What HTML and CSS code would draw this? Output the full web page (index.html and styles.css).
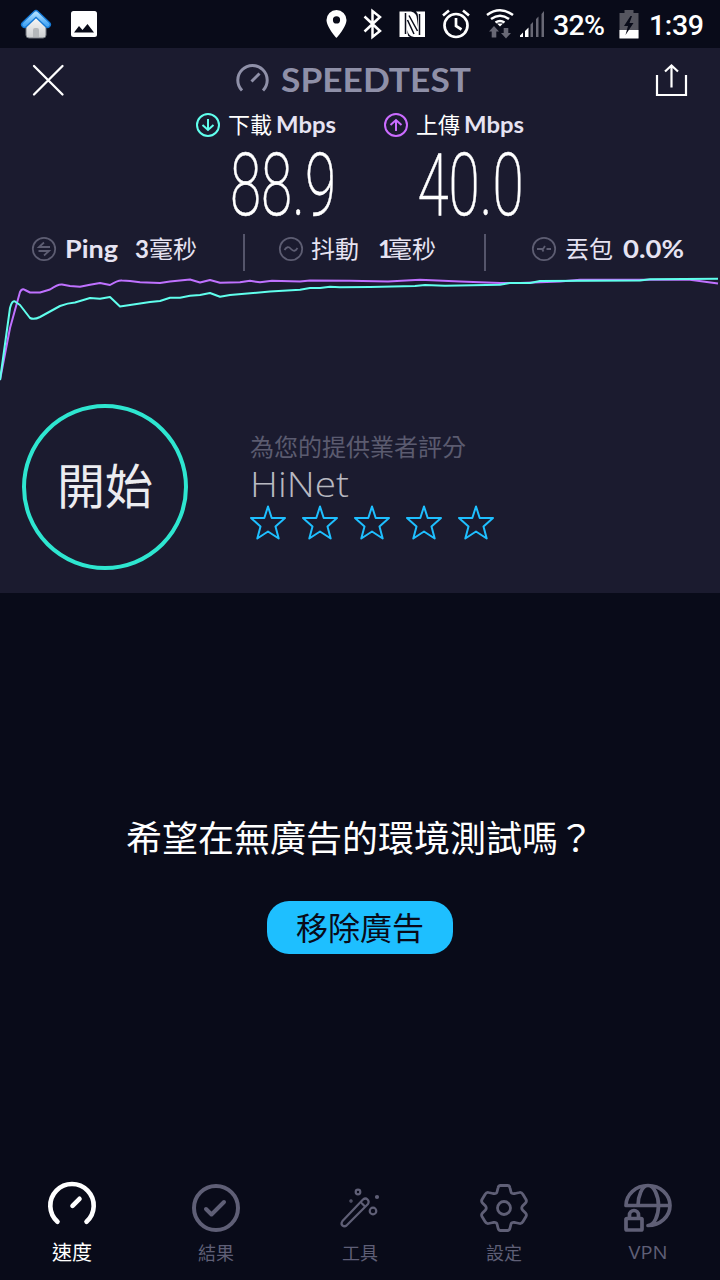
FILE: index.html
```html
<!DOCTYPE html>
<html lang="zh-Hant">
<head>
<meta charset="utf-8">
<title>Speedtest</title>
<link rel="stylesheet" href="styles.css">
</head>
<body>
<div class="app">
  <div class="status">
    <svg width="110" height="48" viewBox="0 0 110 48">
      <defs>
        <linearGradient id="roof" x1="0" y1="0" x2="0" y2="1"><stop offset="0" stop-color="#a8dcff"/><stop offset="1" stop-color="#4aa8f5"/></linearGradient>
        <linearGradient id="wall" x1="0" y1="0" x2="0" y2="1"><stop offset="0" stop-color="#fff"/><stop offset="1" stop-color="#ccced0"/></linearGradient>
      </defs>
      <path d="M26 22 36 14 46 22V35Q46 38 43 38H29Q26 38 26 35Z" fill="url(#wall)" stroke="#70757c" stroke-width="1"/>
      <path d="M33 37V30Q33 28 35 28H37Q39 28 39 30V37Z" fill="#b5b8bb"/>
      <path d="M24.500 24.500 36 13.500 47.500 24.500" fill="none" stroke="#1478d4" stroke-width="7" stroke-linecap="round" stroke-linejoin="round"/>
      <path d="M24.500 24.500 36 13.500 47.500 24.500" fill="none" stroke="url(#roof)" stroke-width="4.300" stroke-linecap="round" stroke-linejoin="round"/>
      <rect x="71" y="11" width="26" height="26" rx="2.500" fill="#fff"/>
      <path d="M74 32.500 79 26l3.500 4 5-6 6.500 8.500Z" fill="#090b19"/>
    </svg>
    <svg class="status-icons" width="224" height="48" viewBox="322 0 224 48">
      <path d="M336.500 10a10 10 0 0 0-10 10c0 7 10 18 10 18s10-11 10-18a10 10 0 0 0-10-10Zm0 6.300a3.600 3.600 0 1 1 0 7.200 3.600 3.600 0 0 1 0-7.200Z" fill="#fff" fill-rule="evenodd"/>
      <path d="M364.500 16.500 380 31l-7.500 6V11l7.500 6-15.500 14.500" fill="none" stroke="#fff" stroke-width="2.500"/>
      <path d="M399.500 11.500H411Q417 13 417 19L418 27V16Q418 13 416 11.500H425V37H414Q408 36 407.500 30V22V33Q407.500 36 410 37H399.500Z" fill="#fff"/>
      <path d="M405.500 13V34M409 15.500 417.500 31M407.500 20 414 34M419.500 14V35" fill="none" stroke="#090b19" stroke-width="1.500"/>
      <g fill="none" stroke="#fff" stroke-width="2.700"><circle cx="456" cy="25.500" r="11.500"/><path d="M456 18v8l5.500 3.500M443 15.500l6-5M469 15.500l-6-5"/></g>
      <g fill="none" stroke="#fff" stroke-width="2.500"><path d="M487 15q13-9.500 26 0M491 19q9-6.500 18 0M495.500 22.500q4.500-3 9 0"/></g><path d="m497 23.500 3 3 3-3Z" fill="#fff"/>
      <path d="m494 26-5 5.500h2.700v6h4.600v-6h2.700ZM506 38.500l-5-5.500h2.700v-5h4.600v5h2.700Z" fill="#686875"/>
      <path d="M520 37v-1.500l3-3V37ZM525 37v-6l3.500-3.500V37Z" fill="#fff"/>
      <path d="M530.500 37V24.500l2.500-2.500v15ZM536 37V19l2.500-2.500V37ZM541.500 37V14L544 11v26Z" fill="#686875"/>
    </svg>
    <svg width="158" height="48" viewBox="552 0 158 48">
      <text class="clock" x="553" y="34.500" textLength="52">32%</text>
      <path d="M619.500 13h5v-3h9v3h5v25h-19Z" fill="#55555f"/><path d="M619.500 30h19v8.500h-19Z" fill="#fff"/><path d="m630.500 16-6.500 10h4l-2.500 9 8-12h-4l2.500-7Z" fill="#090b19"/>
      <text class="clock" x="649" y="34.500" textLength="55">1:39</text>
    </svg>
  </div>

  <div class="panel">
    <div class="header">
      <svg width="32" height="32" viewBox="32 64 32 32"><path d="M34 66 62.500 94.500M62.500 66 34 94.500" stroke="#fff" stroke-width="2.300" stroke-linecap="round"/></svg>
      <svg class="logo" width="240" height="44" viewBox="234 58 240 44">
        <g fill="none" stroke="#8f90a8" stroke-width="3"><path d="M242 90.500a14.700 14.700 0 1 1 21 0M251.500 81.500l8-8"/></g>
        <text class="brand" x="281" y="91.500" textLength="190" lengthAdjust="spacingAndGlyphs">SPEEDTEST</text>
      </svg>
      <svg width="34" height="34" viewBox="654 63 34 34"><path d="M657 75v20h29V75M671.500 87.500V65.500M665 71.500l6.500-6 6.500 6" fill="none" stroke="#fff" stroke-width="2.200"/></svg>
    </div>

    <div class="labels">
      <div class="label">
        <svg width="24" height="24" viewBox="0 0 24 24" fill="none" stroke="#60ffed" stroke-width="2"><circle cx="12" cy="12" r="11"/><path d="M12 6v11M6.500 12l5.500 5 5.500-5"/></svg>
        <span class="label-text">下載</span>
        <svg width="62" height="30"><text class="unit" x="1" y="23" textLength="60" lengthAdjust="spacingAndGlyphs">Mbps</text></svg>
      </div>
      <div class="label">
        <svg width="24" height="24" viewBox="0 0 24 24" fill="none" stroke="#cb6cff" stroke-width="2"><circle cx="12" cy="12" r="11"/><path d="M12 18V7M6.500 12 12 7l5.500 5"/></svg>
        <span class="label-text">上傳</span>
        <svg width="62" height="30"><text class="unit" x="1" y="23" textLength="60" lengthAdjust="spacingAndGlyphs">Mbps</text></svg>
      </div>
    </div>

    <div class="values">
      <svg width="110" height="76"><text class="value" x="2" y="70.500" textLength="106" lengthAdjust="spacingAndGlyphs">88.9</text></svg>
      <svg width="110" height="76"><text class="value" x="2.500" y="70.500" textLength="106" lengthAdjust="spacingAndGlyphs">40.0</text></svg>
    </div>

    <div class="metrics">
      <div class="metric ping">
        <svg width="24" height="24" viewBox="0 0 24 24" fill="none" stroke="#5d5d72" stroke-width="1.800"><circle cx="12" cy="12" r="11.200"/><path d="M18 10H7l5-4.500M6.500 14H17l-5 4.500"/></svg>
        <svg width="54" height="32"><text class="metric-latin" x="0" y="25" textLength="53" lengthAdjust="spacingAndGlyphs">Ping</text></svg>
        <span class="reading"><b>3</b>毫秒</span>
      </div>
      <div class="metric jitter">
        <svg width="24" height="24" viewBox="0 0 24 24" fill="none" stroke="#5d5d72" stroke-width="1.800"><circle cx="12" cy="12" r="11.200"/><path d="M5.500 13q3-5 6.500-1t6.500-1"/></svg>
        <span class="cjk">抖動</span>
        <span class="reading one"><b>1</b>毫秒</span>
      </div>
      <div class="metric loss">
        <svg width="24" height="24" viewBox="0 0 24 24" fill="none" stroke="#5d5d72" stroke-width="1.800"><circle cx="12" cy="12" r="11.200"/><path d="M5 12h5l1.500 2.500M11 12l2-3M14.500 12h4.500"/></svg>
        <span class="cjk">丟包</span>
        <svg width="62" height="32"><text class="metric-latin" x="1" y="25" textLength="61" lengthAdjust="spacingAndGlyphs">0.0%</text></svg>
      </div>
    </div>

    <svg class="chart" width="720" height="110" viewBox="0 274 720 110" fill="none" stroke-width="2" stroke-linejoin="round">
      <path stroke="#bf71ff" d="M0 380 10 328 20 292Q22 288 25 290L30 292.500H40L50 289.500Q58 284 62 284.500L70 286 80 286.800 90 284.700 100 283 110 285Q118 280 122 280.500L130 281 140 282.300 160 283 170 281.500 190 279.500 200 282.500 210 280 220 282.700 240 282.300 250 280.800 260 282.300 272 280.800 300 281.500 310 280.500 350 280.800 388 281.500 420 279.700 460 281.500 500 283H520L560 281.500 580 279.800H690L718 283.500"/>
      <path stroke="#60ffed" d="M0 380 10 308Q12 300 15 301.500L20 305 30 318Q34 320 40 317L60 306Q68 303 75 302.500L90 298 100 298.800 110 297 120 306.500 150 302 160 301 170 297.700H180L190 295.700 200 295 210 293 220 296.800 230 295 270 291.500 300 289.800 310 288H320L330 286.800 340 287.300 370 287 415 286 425 285 445 285.700 500 284.700 510 283H530L540 281 640 280.500 650 279.200 718 278.700"/>
    </svg>

    <div class="provider">
      <div class="start">開始</div>
      <div class="rating">
        <div class="prompt">為您的提供業者評分</div>
        <svg class="isp" width="104" height="34"><text class="isp-name" x="0" y="25.500" textLength="99" lengthAdjust="spacingAndGlyphs">HiNet</text></svg>
        <div class="stars">
          <svg class="star" viewBox="0 0 36 36"><path d="M18 1.500 21.700 13H35L25.500 21.500 28.700 33.500 18 26.500 7.300 33.500 10.500 21.500 1 13H14.300Z"/></svg>
          <svg class="star" viewBox="0 0 36 36"><path d="M18 1.500 21.700 13H35L25.500 21.500 28.700 33.500 18 26.500 7.300 33.500 10.500 21.500 1 13H14.300Z"/></svg>
          <svg class="star" viewBox="0 0 36 36"><path d="M18 1.500 21.700 13H35L25.500 21.500 28.700 33.500 18 26.500 7.300 33.500 10.500 21.500 1 13H14.300Z"/></svg>
          <svg class="star" viewBox="0 0 36 36"><path d="M18 1.500 21.700 13H35L25.500 21.500 28.700 33.500 18 26.500 7.300 33.500 10.500 21.500 1 13H14.300Z"/></svg>
          <svg class="star" viewBox="0 0 36 36"><path d="M18 1.500 21.700 13H35L25.500 21.500 28.700 33.500 18 26.500 7.300 33.500 10.500 21.500 1 13H14.300Z"/></svg>
        </div>
      </div>
    </div>
  </div>

  <div class="promo">
    <div class="question">希望在無廣告的環境測試嗎？</div>
    <div class="remove">移除廣告</div>
  </div>

  <div class="tabs">
    <div class="tab active">
      <svg class="tab-icon" viewBox="0 0 52 56"><path d="M11.500 43.800a21.700 21.700 0 1 1 29 0M26.500 27.800l7-7" stroke-width="4.600"/></svg>
      <span>速度</span>
    </div>
    <div class="tab">
      <svg class="tab-icon" viewBox="0 0 52 56"><circle cx="26" cy="30" r="22" stroke-width="4"/><path d="M16 31l5.500 5.500L34 24" stroke-width="4"/></svg>
      <span>結果</span>
    </div>
    <div class="tab">
      <svg class="tab-icon" viewBox="0 0 52 56" stroke-width="2.200"><path d="M8.500 43 29 21.500Q31.500 19.500 33.500 21.500T34 26L12.500 47.500Q10.500 49 8.500 47.500T8.500 43ZM28 25.500l2.500 2.500"/><circle cx="24" cy="14" r="2.300"/><circle cx="39" cy="33" r="3.300"/><circle cx="43" cy="19" r="1"/><circle cx="17" cy="23" r=".6"/></svg>
      <span>工具</span>
    </div>
    <div class="tab">
      <svg class="tab-icon" viewBox="0 0 52 56" stroke-width="2.800"><circle cx="26" cy="30" r="6.500"/><path d="M22.500 7.500h7Q31.500 7.500 32 10L33 14Q33.500 16 37 15.500L41.500 14.500Q43.500 14 45 16.500L48 21.500Q49 23.500 47.500 25L44.500 28Q43 30 44.500 32L47.500 35Q49 36.500 48 38.500L45 43.500Q43.500 46 41.500 45.500L37 44.500Q33.500 44 33 46L32 50Q31.500 52.500 29.500 52.500H22.500Q20.500 52.500 20 50L19 46Q18.500 44 15 44.500L10.500 45.500Q8.500 46 7 43.500L4 38.500Q3 36.500 4.500 35L7.500 32Q9 30 7.500 28L4.500 25Q3 23.500 4 21.500L7 16.500Q8.500 14 10.500 14.500L15 15.500Q18.500 16 19 14L20 10Q20.500 7.500 22.500 7.500Z"/></svg>
      <span>設定</span>
    </div>
    <div class="tab">
      <svg class="tab-icon" viewBox="0 0 52 56" stroke-width="3.700"><path d="M4 27.500A22 20 0 1 1 26 47.500M4 27.500H47M16 27.500C16 18 20 7.500 26 7.500S36.500 18 36.500 27.500 32.500 47.500 26 47.500"/><rect x="4" y="40.500" width="16" height="11.500" rx="1"/><path d="M7.500 40V37a4.500 4.500 0 0 1 9 0v3"/></svg>
      <svg class="vpn" width="44" height="30"><text x="2.500" y="22" textLength="39" lengthAdjust="spacingAndGlyphs">VPN</text></svg>
    </div>
  </div>
</div>
</body>
</html>
```
FILE: styles.css
```css
* { box-sizing: border-box; }
body { margin: 0; background: #090b19; }
svg { display: block; flex: none; overflow: visible; }
.app { width: 720px; height: 1280px; display: flex; flex-direction: column; overflow: hidden; font-family: "Noto Sans CJK TC", sans-serif; color: #e6e3f2; }
.status { height: 48px; display: flex; }
.status-icons { margin-left: 212px; margin-right: 6px; }
.clock { font: 500 28.500px Roboto, sans-serif; fill: #fff; }
.panel { height: 544.500px; background: #1b1b2f; flex: none; }
.header { height: 64px; padding: 0 32px; display: flex; align-items: center; justify-content: space-between; }
.logo { margin-right: 10px; }
.brand { font: 700 33px Lato, sans-serif; fill: #8f90a8; }
.labels { height: 26px; padding-left: 196px; display: flex; gap: 46px; align-items: center; }
.label { display: flex; align-items: center; width: 142px; }
.label-text { font-size: 22px; line-height: 26px; margin: 0 3px 0 8px; padding-bottom: 4px; color: #fff; white-space: nowrap; }
.unit { font: 700 22px Lato, sans-serif; fill: #e6e3f2; }
.values { height: 90px; padding: 5.500px 0 0 228px; display: flex; gap: 77px; }
.value { font: 200 87.500px Roboto, sans-serif; fill: #fff; stroke: #fff; stroke-width: .5px; }
.metrics { height: 46px; display: flex; align-items: flex-start; padding: 6px 0 0 32px; font-size: 24px; }
.metric { display: flex; align-items: center; height: 37px; padding-bottom: 7px; white-space: nowrap; }
.metric b { font: 700 24px Lato, sans-serif; }
.cjk, .reading { padding-bottom: 3px; }
.ping { width: 213px; border-right: 2px solid #55556b; gap: 9px; }
.ping .reading { margin-left: 7px; }
.jitter { width: 241px; padding-left: 34px; border-right: 2px solid #55556b; gap: 8px; }
.jitter .reading { margin-left: 11px; }
.one b { letter-spacing: -4px; }
.loss { padding-left: 46px; gap: 9px; }
.metric-latin { font: 700 24px Lato, sans-serif; fill: #e6e3f2; }
.provider { display: flex; padding: 20.500px 0 0 22px; gap: 62px; }
.start { width: 166px; height: 166px; margin-top: -.5px; padding-bottom: 8px; border: 4px solid #2ee6d0; border-radius: 50%; display: flex; align-items: center; justify-content: center; font-size: 48px; line-height: 60px; color: #ececf0; }
.rating { padding-top: 23.500px; }
.prompt { font-size: 24px; line-height: 36px; color: #5b5b70; }
.isp { margin-top: 7px; }
.isp-name { font: 300 35px "Open Sans", sans-serif; fill: #b8b8c0; }
.stars { display: flex; gap: 16px; }
.star { width: 36px; height: 36px; fill: none; stroke: #1ebfff; stroke-width: 2; stroke-linejoin: round; }
.promo { height: 571.500px; padding-top: 216px; display: flex; flex-direction: column; align-items: center; }
.question { font-size: 36px; line-height: 54px; color: #fff; white-space: nowrap; }
.remove { margin-top: 38.500px; width: 186px; height: 53px; border-radius: 22px; background: #1ebfff; color: #090b19; font-size: 32px; line-height: 51px; text-align: center; }
.tabs { height: 116px; display: flex; padding-top: 14px; }
.tab { width: 144px; display: flex; flex-direction: column; align-items: center; color: #5f5f76; font-size: 18px; line-height: 30px; }
.tab-icon { width: 52px; height: 56px; margin-bottom: 3px; fill: none; stroke: currentColor; stroke-linecap: round; stroke-linejoin: round; }
.active { color: #fff; font-size: 20px; }
.vpn { font: 400 18px "Open Sans", sans-serif; fill: currentColor; }
```
